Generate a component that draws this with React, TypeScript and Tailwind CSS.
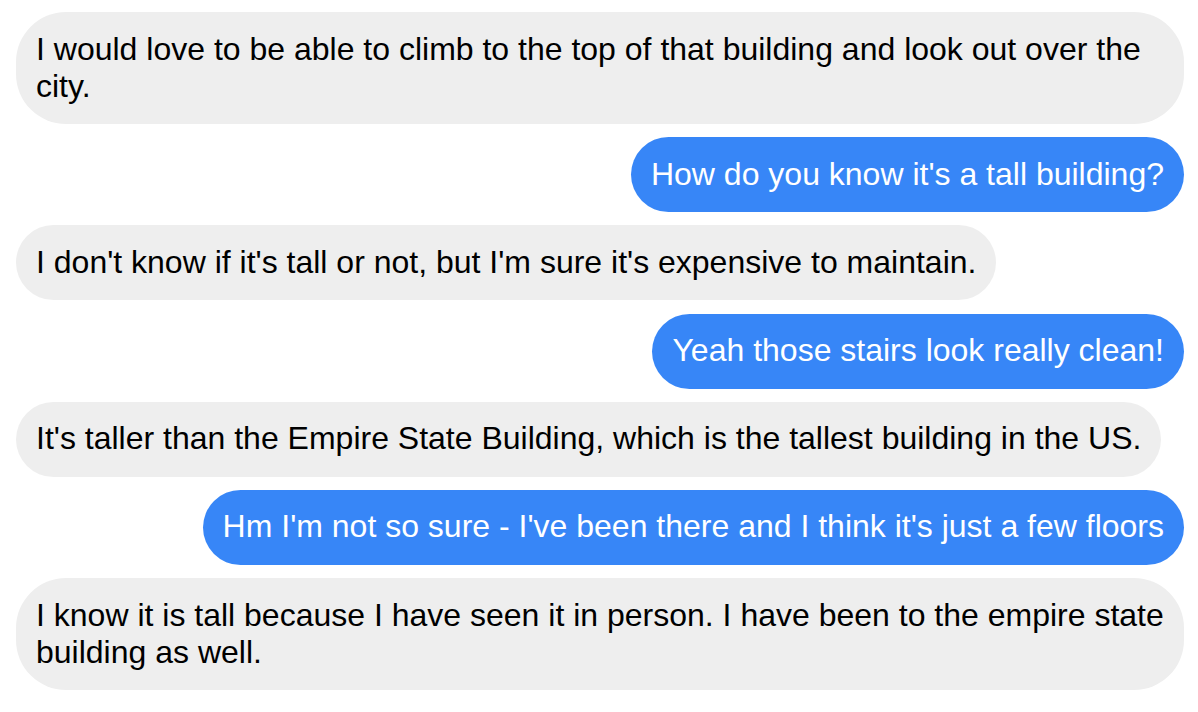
import React from "react";

type Msg = { me: boolean; lines: string[]; full?: boolean };

const msgs: Msg[] = [
  {
    me: false,
    full: true,
    lines: [
      "I would love to be able to climb to the top of that building and look out over the",
      "city.",
    ],
  },
  { me: true, lines: ["How do you know it's a tall building?"] },
  {
    me: false,
    lines: ["I don't know if it's tall or not, but I'm sure it's expensive to maintain."],
  },
  { me: true, lines: ["Yeah those stairs look really clean!"] },
  {
    me: false,
    lines: [
      "It's taller than the Empire State Building, which is the tallest building in the US.",
    ],
  },
  {
    me: true,
    lines: ["Hm I'm not so sure - I've been there and I think it's just a few floors"],
  },
  {
    me: false,
    full: true,
    lines: [
      "I know it is tall because I have seen it in person. I have been to the empire state",
      "building as well.",
    ],
  },
];

export default function App() {
  return (
    <div
      className="w-[1198px] h-[712px] bg-white flex flex-col gap-[13.2px] pt-3 pl-4 pr-[14px] overflow-hidden"
      style={{ fontFamily: '"Liberation Sans", Arial, Helvetica, sans-serif' }}
    >
      {msgs.map((m, i) => (
        <div key={i} className={m.me ? "flex justify-end" : "flex justify-start"}>
          <div
            className={
              (m.me ? "bg-[#3786f7] text-white " : "bg-[#eeeeee] text-black ") +
              (m.full ? "w-full " : "") +
              "rounded-[50px] px-5 pt-[18.5px] pb-[19.5px] text-[32px] leading-[37px] whitespace-nowrap"
            }
          >
            {m.lines.map((l, j) => (
              <div key={j}>{l}</div>
            ))}
          </div>
        </div>
      ))}
    </div>
  );
}
